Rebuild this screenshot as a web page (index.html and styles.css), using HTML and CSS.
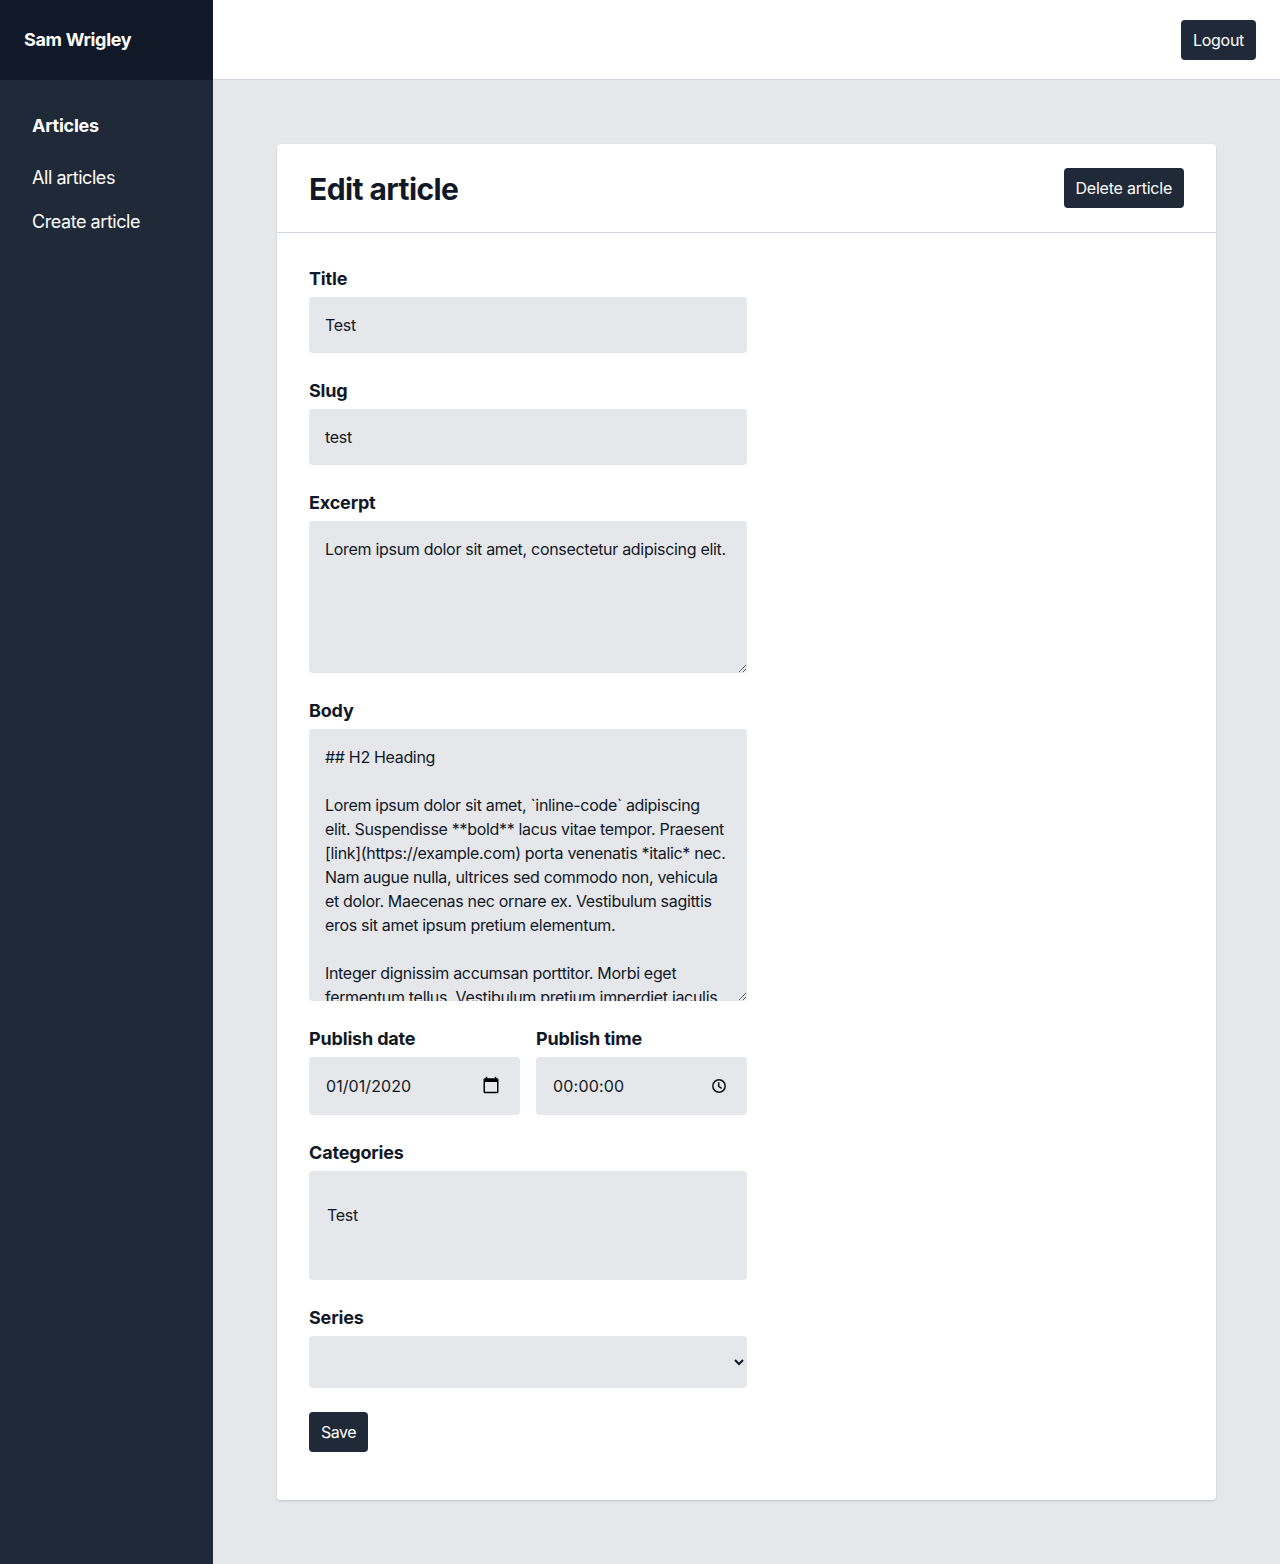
FILE: index.html
```html
<!DOCTYPE html>
<html lang="en">
<head>
<meta charset="utf-8">
<title>Edit article</title>
<link rel="stylesheet" href="styles.css">
</head>
<body>
<div class="layout">
  <aside class="sidebar">
    <div class="brand"><span class="brand-name">Sam Wrigley</span></div>
    <nav class="nav">
      <h2 class="nav-heading"><span>Articles</span></h2>
      <a class="nav-link"><span>All articles</span></a>
      <a class="nav-link"><span>Create article</span></a>
    </nav>
  </aside>
  <div class="main">
    <header class="topbar"><button class="button">Logout</button></header>
    <main class="content">
      <section class="card">
        <div class="card-header">
          <h1 class="card-title">Edit article</h1>
          <button class="button delete">Delete article</button>
        </div>
        <form class="form">
          <div class="field">
            <label class="label" for="title"><span>Title</span></label>
            <input class="control" id="title" type="text" value="Test">
          </div>
          <div class="field">
            <label class="label" for="slug"><span>Slug</span></label>
            <input class="control" id="slug" type="text" value="test">
          </div>
          <div class="field">
            <label class="label" for="excerpt"><span>Excerpt</span></label>
            <textarea class="control excerpt" id="excerpt">Lorem ipsum dolor sit amet, consectetur adipiscing elit.</textarea>
          </div>
          <div class="field">
            <label class="label" for="body"><span>Body</span></label>
            <textarea class="control body" id="body">## H2 Heading

Lorem ipsum dolor sit amet, `inline-code` adipiscing
elit. Suspendisse **bold** lacus vitae tempor. Praesent
[link](https://example.com) porta venenatis *italic* nec.
Nam augue nulla, ultrices sed commodo non, vehicula
et dolor. Maecenas nec ornare ex. Vestibulum sagittis
eros sit amet ipsum pretium elementum.

Integer dignissim accumsan porttitor. Morbi eget
fermentum tellus. Vestibulum pretium imperdiet iaculis.</textarea>
          </div>
          <div class="field-row">
            <div class="field">
              <span class="label"><span>Publish date</span></span>
              <div class="control picker">
                <span class="date-value">01/01/2020</span>
                <svg class="calendar-icon" viewBox="0 0 24 24"><path d="M20 3h-1V1h-2v2H7V1H5v2H4c-1.100 0-2 .9-2 2v16c0 1.100.9 2 2 2h16c1.100 0 2-.9 2-2V5c0-1.100-.9-2-2-2zm0 18H4V8h16v13z"/></svg>
              </div>
            </div>
            <div class="field">
              <span class="label"><span>Publish time</span></span>
              <div class="control picker">
                <span class="time-value">00:00:00</span>
                <svg class="clock-icon" viewBox="0 0 16 16"><circle cx="8" cy="8" r="6.200"/><path d="M7.700 4.300V8.300L10.700 10.300"/></svg>
              </div>
            </div>
          </div>
          <div class="field">
            <span class="label"><span>Categories</span></span>
            <div class="control list"><span>Test</span></div>
          </div>
          <div class="field">
            <label class="label" for="series"><span>Series</span></label>
            <select class="control series" id="series"><option></option></select>
          </div>
          <button class="button save" type="button">Save</button>
        </form>
      </section>
    </main>
  </div>
</div>
</body>
</html>
```
FILE: styles.css
```css
*, *::before, *::after { box-sizing: border-box; }

body {
  margin: 0;
  font-family: Inter, "Liberation Sans", sans-serif;
  font-size: 16px;
  line-height: 24px;
  letter-spacing: -0.3px;
  color: #111827;
  background: #e5e7eb;
}

h1, h2 { margin: 0; }

.layout { display: flex; min-height: 1564px; }

.sidebar { flex: 0 0 213px; background: #1f2937; color: #fff; }

.brand {
  display: flex;
  align-items: center;
  height: 80px;
  padding: 0 24px;
  background: #111827;
  font-size: 18px;
  font-weight: 700;
  letter-spacing: -0.32px;
}

.nav { padding: 32px; }

.nav-heading {
  margin-bottom: 24px;
  font-size: 18px;
  line-height: 28px;
  letter-spacing: -0.25px;
}

.nav-link {
  display: block;
  margin-bottom: 16px;
  font-size: 18px;
  line-height: 28px;
  letter-spacing: -0.44px;
}

.main { flex: 1; min-width: 0; }

.topbar {
  display: flex;
  align-items: center;
  justify-content: flex-end;
  height: 80px;
  padding: 0 24px;
  background: #fff;
  border-bottom: 1px solid #d1d5db;
}

.button {
  height: 40px;
  padding: 8px 12px;
  border: 0;
  border-radius: 4px;
  background: #1f2937;
  color: #fff;
  font: inherit;
  letter-spacing: inherit;
}

.delete { letter-spacing: -0.23px; }
.save { letter-spacing: -0.5px; }

.content { padding: 64px; }

.card {
  background: #fff;
  border-radius: 4px;
  box-shadow: 0 1px 3px rgba(0, 0, 0, 0.1), 0 1px 2px rgba(0, 0, 0, 0.06);
}

.card-header {
  display: flex;
  align-items: center;
  justify-content: space-between;
  padding: 24px 32px;
  border-bottom: 1px solid #d1d5db;
}

.card-title { padding-top: 2px; font-size: 30px; line-height: 36px; letter-spacing: -0.58px; }

.form {
  display: flex;
  flex-direction: column;
  align-items: flex-start;
  gap: 24px;
  padding: 32px 32px 48px;
}

.field { display: flex; flex-direction: column; gap: 4px; width: 438px; }

.field-row { display: flex; gap: 16px; width: 438px; }
.field-row .field { flex: 1; width: auto; }

.label { font-size: 18px; line-height: 28px; font-weight: 700; letter-spacing: -0.17px; }

.control {
  display: block;
  width: 100%;
  height: 56px;
  margin: 0;
  padding: 16px;
  border: 0;
  border-radius: 4px;
  background: #e5e7eb;
  color: #111827;
  font: inherit;
  letter-spacing: inherit;
}

textarea.control { overflow: hidden; white-space: pre; }
.excerpt { height: 152px; }
.body.control { height: 272px; letter-spacing: -0.32px; }

.picker {
  display: flex;
  align-items: center;
  justify-content: space-between;
  height: 58px;
  padding: 0 20px 0 17px;
}

.date-value { letter-spacing: 0.08px; }
.time-value { letter-spacing: 0.2px; }

.calendar-icon { width: 18px; height: 18px; margin-bottom: 2px; fill: #000; }
.clock-icon { width: 16px; height: 16px; fill: none; stroke: #111; stroke-width: 1.5; }

.list { height: 109px; padding: 32px 18px; }
.series { height: 52px; }
```
